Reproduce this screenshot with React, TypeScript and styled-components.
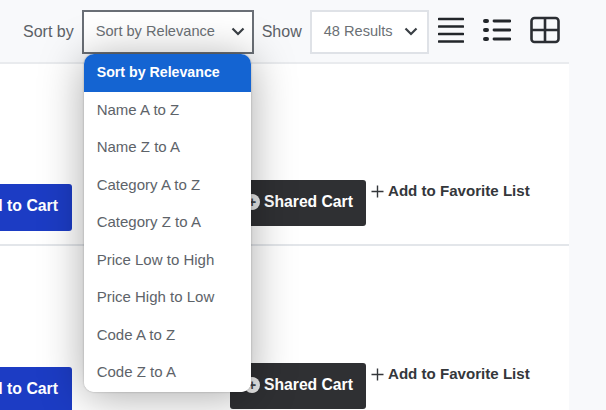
import styled, { createGlobalStyle } from 'styled-components';

const GlobalStyle = createGlobalStyle`
  html, body {
    margin: 0;
    padding: 0;
    width: 606px;
    height: 410px;
    overflow: hidden;
    background: #f8f9fb;
    font-family: "Liberation Sans", Arial, sans-serif;
  }
`;

const Page = styled.div`
  width: 569px;
  height: 410px;
  position: relative;
`;

const Toolbar = styled.div`
  height: 64px;
  box-sizing: border-box;
  padding: 10px 0 0 23px;
  display: flex;
  align-items: flex-start;
  border-bottom: 2px solid #e9ebee;
`;

const ToolbarLabel = styled.span`
  font-size: 16px;
  line-height: 43px;
  color: #5c6167;
  margin-right: 8px;
`;

const SelectWrap = styled.div`
  position: relative;
`;

const SelectBox = styled.div<{ $width: number; $focused?: boolean; $pad: number }>`
  width: ${({ $width }) => $width}px;
  height: 44px;
  box-sizing: border-box;
  background: #fff;
  border: ${({ $focused }) => ($focused ? '2px solid #6a6f76' : '2px solid #dfe2e7')};
  display: flex;
  align-items: center;
  justify-content: space-between;
  padding: 0 ${({ $pad }) => $pad}px 2px 12px;
  font-size: 14.6px;
  color: #6b7075;
  margin-right: 8px;
`;

const Chevron = styled.svg`
  width: 14px;
  height: 9px;
  flex: none;
`;

const ViewIcons = styled.div`
  display: flex;
  gap: 19px;
  padding-top: 6px;
  margin-left: 1px;
`;

const ViewIcon = styled.svg<{ $width: number }>`
  width: ${({ $width }) => $width}px;
  height: 28px;
  display: block;
`;

const Dropdown = styled.ul`
  position: absolute;
  left: 2px;
  top: 44px;
  width: 167px;
  margin: 0;
  padding: 0;
  list-style: none;
  background: #fff;
  border-radius: 10px;
  overflow: hidden;
  box-shadow: 0 4px 44px rgba(0, 0, 0, 0.34), 0 0 2px rgba(0, 0, 0, 0.3);
  z-index: 5;
`;

const DropdownItem = styled.li<{ $active?: boolean }>`
  height: 37.5px;
  line-height: ${({ $active }) => ($active ? 37 : 35.5)}px;
  padding-left: 13px;
  font-size: ${({ $active }) => ($active ? 14.2 : 15)}px;
  font-weight: ${({ $active }) => ($active ? 700 : 400)};
  color: ${({ $active }) => ($active ? '#fff' : '#5d6369')};
  background: ${({ $active }) => ($active ? '#1464d2' : '#fff')};
`;

const ProductRow = styled.div`
  height: 182px;
  box-sizing: border-box;
  background: #fff;
  border-bottom: 2px solid #e3e6ea;
  display: flex;
  align-items: flex-start;
  padding-top: 116px;
  overflow: hidden;

  & + & {
    padding-top: 117px;
  }
`;

const CartButton = styled.div`
  width: 150px;
  height: 47px;
  flex: none;
  margin: 4px 158px 0 -78px;
  box-sizing: border-box;
  background: #1c3cc4;
  color: #fff;
  border-radius: 3px;
  font-size: 15.8px;
  font-weight: 700;
  line-height: 44px;
  text-align: right;
  padding-right: 14px;
`;

const SharedButton = styled.div`
  width: 136px;
  height: 46px;
  flex: none;
  box-sizing: border-box;
  background: #2f3033;
  color: #fff;
  border-radius: 3px;
  font-size: 15.7px;
  font-weight: 700;
  display: flex;
  align-items: center;
  padding: 0 0 3px 14px;
  gap: 4px;
`;

const PlusBadge = styled.span`
  width: 16px;
  height: 16px;
  border-radius: 50%;
  background: #e9e9e9;
  color: #444;
  font-size: 14px;
  line-height: 16px;
  text-align: center;
  flex: none;
`;

const FavoriteLink = styled.div`
  margin: 0 0 0 5px;
  display: flex;
  align-items: center;
  gap: 4px;
  font-size: 15.1px;
  font-weight: 700;
  color: #34373b;
  line-height: 22px;
`;

const FavoritePlus = styled.svg`
  width: 13px;
  height: 13px;
  flex: none;
`;

const options = [
  'Sort by Relevance',
  'Name A to Z',
  'Name Z to A',
  'Category A to Z',
  'Category Z to A',
  'Price Low to High',
  'Price High to Low',
  'Code A to Z',
  'Code Z to A',
];

const ChevronIcon = ({ color }: { color: string }) => (
  <Chevron viewBox="0 0 14 9">
    <path d="M1.5 1.5 L7 7 L12.5 1.5" fill="none" stroke={color} strokeWidth="2.2" />
  </Chevron>
);

const Product = () => (
  <ProductRow>
    <CartButton>Add to Cart</CartButton>
    <SharedButton>
      <PlusBadge>+</PlusBadge>
      Shared Cart
    </SharedButton>
    <FavoriteLink>
      <FavoritePlus viewBox="0 0 13 13">
        <path d="M6.5 0.5 V12.5 M0.5 6.5 H12.5" stroke="#34373b" strokeWidth="1.4" />
      </FavoritePlus>
      Add to Favorite List
    </FavoriteLink>
  </ProductRow>
);

const App = () => {
  return (
    <Page>
      <GlobalStyle />
      <Toolbar>
        <ToolbarLabel>Sort by</ToolbarLabel>
        <SelectWrap>
          <SelectBox $width={172} $focused $pad={7}>
            Sort by Relevance
            <ChevronIcon color="#3a3f45" />
          </SelectBox>
          <Dropdown>
            {options.map((o, i) => (
              <DropdownItem key={o} $active={i === 0}>
                {o}
              </DropdownItem>
            ))}
          </Dropdown>
        </SelectWrap>
        <ToolbarLabel>Show</ToolbarLabel>
        <SelectBox $width={119} $pad={9}>
          48 Results
          <ChevronIcon color="#3a3f45" />
        </SelectBox>
        <ViewIcons>
          <ViewIcon $width={26} viewBox="0 0 26 28">
            <path d="M1 3 H25 M1 10.5 H25 M1 18 H25 M1 25.5 H25" stroke="#22262a" strokeWidth="2.6" strokeLinecap="round" />
          </ViewIcon>
          <ViewIcon $width={28} viewBox="0 0 28 28">
            <path d="M11 5 H27 M11 14 H27 M11 23 H27" stroke="#22262a" strokeWidth="2.8" strokeLinecap="round" />
            <path d="M2 5 H4 M2 14 H4 M2 23 H4" stroke="#22262a" strokeWidth="4" strokeLinecap="round" />
          </ViewIcon>
          <ViewIcon $width={30} viewBox="0 0 30 28">
            <rect x="1.5" y="2" width="27" height="24" rx="3" fill="none" stroke="#2b2e33" strokeWidth="2.6" />
            <path d="M15 2 V26 M1.5 14 H28.5" stroke="#2b2e33" strokeWidth="2.6" />
          </ViewIcon>
        </ViewIcons>
      </Toolbar>
      <Product />
      <Product />
    </Page>
  );
};

export default App;
